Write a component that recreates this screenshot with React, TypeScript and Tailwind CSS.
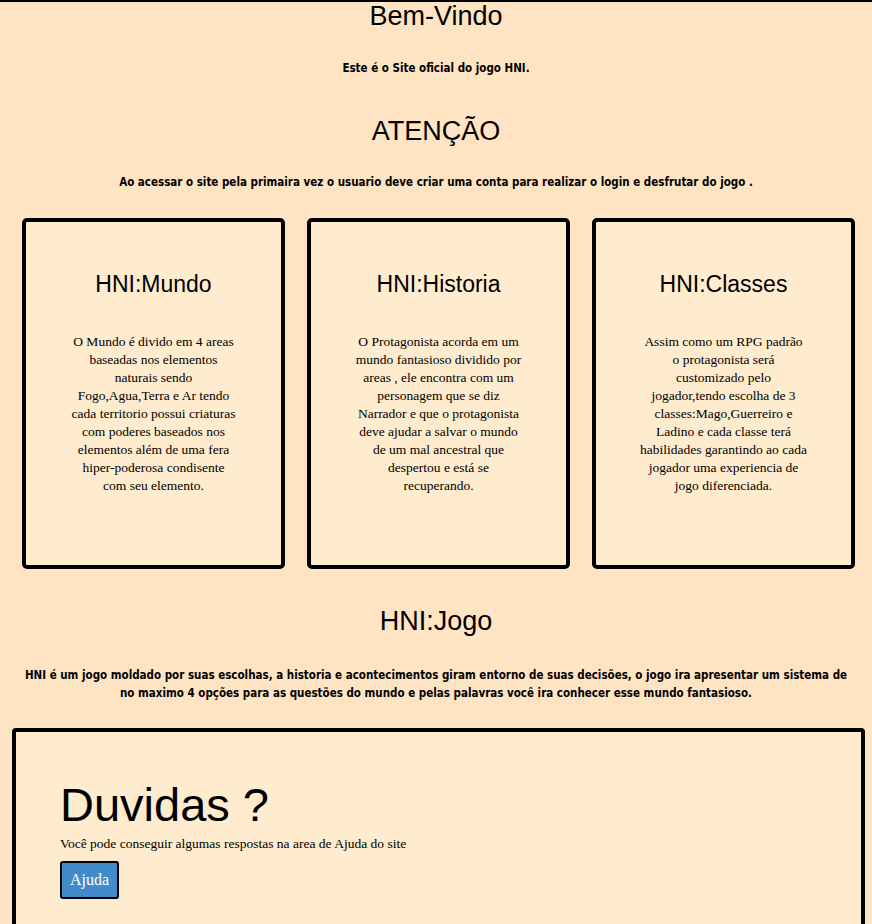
import React from "react";

const sans = "font-['Liberation_Sans',Arial,sans-serif]";
const narrow = "font-['DejaVu_Sans_Condensed','Liberation_Sans_Narrow',sans-serif]";
const serif = "font-['Liberation_Serif',Garamond,serif]";

function Card({ title, lines }: { title: string; lines: string[] }) {
  return (
    <div className="w-[263px] h-[351px] bg-[#ffebcd] border-4 border-black rounded-[5px] flex flex-col items-center">
      <h2 className={`${sans} text-[23px] leading-[26px] text-black mt-[49px]`}>{title}</h2>
      <p className={`${serif} text-[13.5px] leading-[18px] text-black text-center mt-[36px]`}>
        {lines.map((l, i) => (
          <React.Fragment key={i}>
            {l}
            {i < lines.length - 1 && <br />}
          </React.Fragment>
        ))}
      </p>
    </div>
  );
}

export default function App() {
  return (
    <div className="min-h-screen bg-[#ffe4c4] border-t-2 border-black text-black">
      <h1 className={`${sans} text-[27px] leading-[26px] text-center pt-[1px]`}>Bem-Vindo</h1>
      <p className={`${narrow} font-bold text-[11.5px] leading-[16px] text-center mt-[31px]`}>
        Este é o Site oficial do jogo HNI.
      </p>
      <h1 className={`${sans} text-[27px] leading-[26px] text-center mt-[42px]`}>ATENÇÃO</h1>
      <p className={`${narrow} font-bold text-[11.5px] leading-[16px] text-center mt-[30px]`}>
        Ao acessar o site pela primaira vez o usuario deve criar uma conta para realizar o login e desfrutar do jogo .
      </p>
      <div className="flex gap-[22px] pl-[22px] mt-[28px]">
        <Card
          title="HNI:Mundo"
          lines={[
            "O Mundo é divido em 4 areas",
            "baseadas nos elementos",
            "naturais sendo",
            "Fogo,Agua,Terra e Ar tendo",
            "cada territorio possui criaturas",
            "com poderes baseados nos",
            "elementos além de uma fera",
            "hiper-poderosa condisente",
            "com seu elemento.",
          ]}
        />
        <Card
          title="HNI:Historia"
          lines={[
            "O Protagonista acorda em um",
            "mundo fantasioso dividido por",
            "areas , ele encontra com um",
            "personagem que se diz",
            "Narrador e que o protagonista",
            "deve ajudar a salvar o mundo",
            "de um mal ancestral que",
            "despertou e está se",
            "recuperando.",
          ]}
        />
        <Card
          title="HNI:Classes"
          lines={[
            "Assim como um RPG padrão",
            "o protagonista será",
            "customizado pelo",
            "jogador,tendo escolha de 3",
            "classes:Mago,Guerreiro e",
            "Ladino e cada classe terá",
            "habilidades garantindo ao cada",
            "jogador uma experiencia de",
            "jogo diferenciada.",
          ]}
        />
      </div>
      <h2 className={`${sans} text-[27px] leading-[26px] text-center mt-[39px]`}>HNI:Jogo</h2>
      <p className={`${narrow} font-bold text-[11.5px] leading-[18px] text-center whitespace-nowrap mt-[32px]`}>
        HNI é um jogo moldado por suas escolhas, a historia e acontecimentos giram entorno de suas decisões, o jogo ira apresentar um sistema de
        <br />
        no maximo 4 opções para as questões do mundo e pelas palavras você ira conhecer esse mundo fantasioso.
      </p>
      <div className="ml-[12px] mr-[7px] mt-[26px] bg-[#ffebcd] border-4 border-black rounded-[4px] h-[240px] pl-[44px] pt-[46px]">
        <h1 className={`${sans} text-[47px] leading-[54px]`}>Duvidas ?</h1>
        <p className={`${serif} text-[13.5px] leading-[18px] mt-[3px]`}>
          Você pode conseguir algumas respostas na area de Ajuda do site
        </p>
        <button className={`${serif} mt-[8px] bg-[#428bca] text-white text-[16px] leading-[20px] border-2 border-black rounded-[3px] px-[8px] py-[7px]`}>
          Ajuda
        </button>
      </div>
    </div>
  );
}
